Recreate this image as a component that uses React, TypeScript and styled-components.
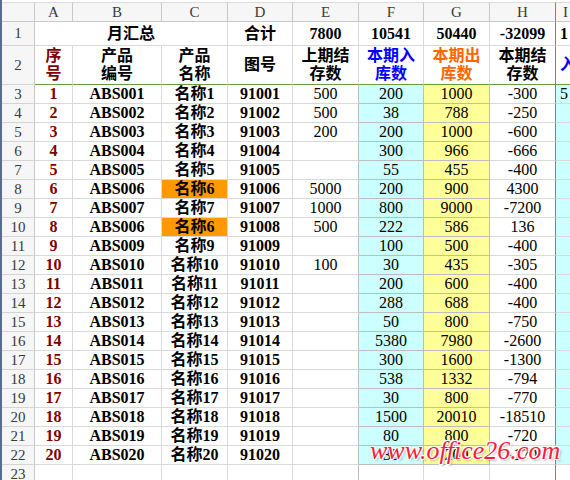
import React from 'react';
import styled, { createGlobalStyle } from 'styled-components';

const GlobalStyle = createGlobalStyle`
  html, body { margin: 0; padding: 0; background: #fff; overflow: hidden; }
`;

const GREEN = '#6c9c3a';
const GRID = '#d9d9d9';
const DARK = '#bdbdbd';
const CYAN = '#ccffff';
const YELLOW = '#ffff99';

const Sheet = styled.div`
  position: relative;
  width: 570px;
  height: 480px;
  overflow: hidden;
  box-sizing: border-box;
  border-left: 2px solid #5a6d8f;
  padding-top: 2px;
  background: #fff;
  font-family: "Liberation Serif", "Noto Sans CJK SC", serif;
`;

const Grid = styled.div`
  display: grid;
  grid-template-columns: 33px 38px 89px 66px 65px 66px 65px 66px 66px 66px;
  grid-template-rows: 20px 24px 39px repeat(21, 19px);
`;

const Head = styled.div<{ $right?: string; $start?: boolean }>`
  box-sizing: border-box;
  display: flex;
  align-items: center;
  justify-content: ${p => (p.$start ? 'flex-start' : 'center')};
  padding-left: ${p => (p.$start ? '7px' : '0')};
  background: #f6f6f6;
  color: #3a3a3a;
  font-size: 15px;
  border-top: 1px solid #dcdcdc;
  border-right: 1px solid ${p => p.$right ?? '#c8c8c8'};
  border-bottom: 1px solid #c8c8c8;
`;

const RowHead = styled.div`
  box-sizing: border-box;
  display: flex;
  align-items: center;
  justify-content: center;
  background: #f6f6f6;
  color: #3a3a3a;
  font-size: 15px;
  border-right: 1px solid #c8c8c8;
  border-bottom: 1px solid #d4d4d4;
`;

type CellProps = {
  $bg?: string;
  $color?: string;
  $bold?: boolean;
  $right?: string;
  $bottom?: string;
  $align?: 'center' | 'flex-start';
  $span?: number;
};

const Cell = styled.div<CellProps>`
  box-sizing: border-box;
  display: flex;
  align-items: center;
  justify-content: ${p => p.$align ?? 'center'};
  padding-left: ${p => (p.$align === 'flex-start' ? '4px' : '0')};
  text-align: center;
  grid-column: span ${p => p.$span ?? 1};
  background: ${p => p.$bg ?? '#fff'};
  color: ${p => p.$color ?? '#000'};
  font-weight: ${p => (p.$bold ? 700 : 400)};
  font-size: 16px;
  line-height: 18px;
  white-space: pre-line;
  overflow: hidden;
  border-right: 1px solid ${p => p.$right ?? GRID};
  border-bottom: 1px solid ${p => p.$bottom ?? GRID};
`;

const Watermark = styled.span`
  position: absolute;
  left: 368px;
  top: 436px;
  font-family: "Liberation Serif", serif;
  font-style: italic;
  font-size: 26px;
  color: #ff1a3a;
  white-space: nowrap;
  text-shadow: 1px 1px 0 #fff, -1px -1px 0 #fff, 1px -1px 0 #fff, -1px 1px 0 #fff, 2px 2px 2px rgba(0,0,0,0.25);
`;

const rows: [string, string, string, string, string, string, string, string][] = [
  ['1', 'ABS001', '名称1', '91001', '500', '200', '1000', '-300'],
  ['2', 'ABS002', '名称2', '91002', '500', '38', '788', '-250'],
  ['3', 'ABS003', '名称3', '91003', '200', '200', '1000', '-600'],
  ['4', 'ABS004', '名称4', '91004', '', '300', '966', '-666'],
  ['5', 'ABS005', '名称5', '91005', '', '55', '455', '-400'],
  ['6', 'ABS006', '名称6', '91006', '5000', '200', '900', '4300'],
  ['7', 'ABS007', '名称7', '91007', '1000', '800', '9000', '-7200'],
  ['8', 'ABS006', '名称6', '91008', '500', '222', '586', '136'],
  ['9', 'ABS009', '名称9', '91009', '', '100', '500', '-400'],
  ['10', 'ABS010', '名称10', '91010', '100', '30', '435', '-305'],
  ['11', 'ABS011', '名称11', '91011', '', '200', '600', '-400'],
  ['12', 'ABS012', '名称12', '91012', '', '288', '688', '-400'],
  ['13', 'ABS013', '名称13', '91013', '', '50', '800', '-750'],
  ['14', 'ABS014', '名称14', '91014', '', '5380', '7980', '-2600'],
  ['15', 'ABS015', '名称15', '91015', '', '300', '1600', '-1300'],
  ['16', 'ABS016', '名称16', '91016', '', '538', '1332', '-794'],
  ['17', 'ABS017', '名称17', '91017', '', '30', '800', '-770'],
  ['18', 'ABS018', '名称18', '91018', '', '1500', '20010', '-18510'],
  ['19', 'ABS019', '名称19', '91019', '', '80', '800', '-720'],
  ['20', 'ABS020', '名称20', '91020', '', '30', '200', '-170'],
];

const letters = ['A', 'B', 'C', 'D', 'E', 'F', 'G', 'H', 'I'];

export default function App() {
  return (
    <>
      <GlobalStyle />
      <Sheet>
        <Grid>
          <Head />
          {letters.map(l => (
            <Head key={l} $right={l === 'H' ? GREEN : undefined} $start={l === 'I'}>{l}</Head>
          ))}

          <RowHead>1</RowHead>
          <Cell $span={3} $bold>月汇总</Cell>
          <Cell $bold>合计</Cell>
          <Cell $bold>7800</Cell>
          <Cell $bold>10541</Cell>
          <Cell $bold>50440</Cell>
          <Cell $bold $right={GREEN}>-32099</Cell>
          <Cell $bold $align="flex-start">1</Cell>

          <RowHead>2</RowHead>
          <Cell $bold $color="#800000" $bottom={GREEN}>{'序\n号'}</Cell>
          <Cell $bold $bottom={GREEN}>{'产品\n编号'}</Cell>
          <Cell $bold $bottom={GREEN}>{'产品\n名称'}</Cell>
          <Cell $bold $bottom={GREEN}>图号</Cell>
          <Cell $bold $bottom={GREEN}>{'上期结\n存数'}</Cell>
          <Cell $bold $color="#0000ff" $bottom={GREEN}>{'本期入\n库数'}</Cell>
          <Cell $bold $color="#ff6600" $bottom={GREEN}>{'本期出\n库数'}</Cell>
          <Cell $bold $bottom={GREEN} $right={GREEN}>{'本期结\n存数'}</Cell>
          <Cell $bold $color="#0000ff" $bottom={GREEN} $align="flex-start">{'入\n'}</Cell>

          {rows.map((r, i) => {
            const hl = i === 5 || i === 7;
            return (
              <React.Fragment key={i}>
                <RowHead>{i + 3}</RowHead>
                <Cell $bold $color="#800000">{r[0]}</Cell>
                <Cell $bold>{r[1]}</Cell>
                <Cell $bold $bg={hl ? '#ff9900' : undefined}>{r[2]}</Cell>
                <Cell $bold>{r[3]}</Cell>
                <Cell $right={DARK}>{r[4]}</Cell>
                <Cell $bg={CYAN} $right={DARK} $bottom={DARK}>{r[5]}</Cell>
                <Cell $bg={YELLOW} $right={DARK} $bottom={DARK}>{r[6]}</Cell>
                <Cell $right={GREEN}>{r[7]}</Cell>
                <Cell $bg={CYAN} $align="flex-start">{i === 0 ? '5' : ''}</Cell>
              </React.Fragment>
            );
          })}

          <RowHead>23</RowHead>
          <Cell />
          <Cell />
          <Cell />
          <Cell />
          <Cell $right={DARK} />
          <Cell />
          <Cell />
          <Cell $right={GREEN} />
          <Cell />
        </Grid>
        <Watermark>www.office26.com</Watermark>
      </Sheet>
    </>
  );
}
